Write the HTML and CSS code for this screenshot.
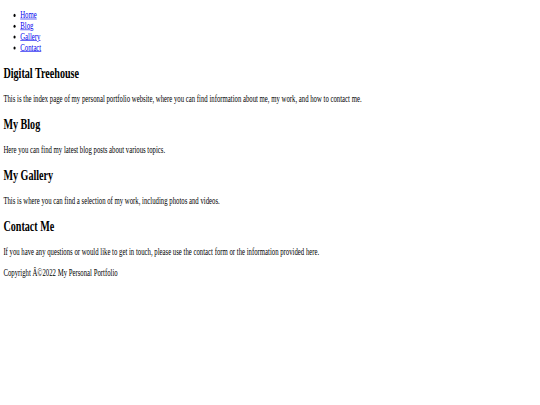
FILE: index.html
```html
<!DOCTYPE html>
<html lang="en">
<head>
<meta charset="utf-8">
<title>Digital Treehouse</title>
<link rel="stylesheet" href="styles.css">
</head>
<body>
<div class="viewport">
<div class="page">
  <header>
    <nav>
      <ul class="nav-list">
        <li><a href="#">Home</a></li>
        <li><a href="#">Blog</a></li>
        <li><a href="#">Gallery</a></li>
        <li><a href="#">Contact</a></li>
      </ul>
    </nav>
  </header>
  <main>
    <section>
      <h2>Digital Treehouse</h2>
      <p>This is the index page of my personal portfolio website, where you can find information about me, my work, and how to contact me.</p>
    </section>
    <section>
      <h2>My Blog</h2>
      <p>Here you can find my latest blog posts about various topics.</p>
    </section>
    <section>
      <h2>My Gallery</h2>
      <p>This is where you can find a selection of my work, including photos and videos.</p>
    </section>
    <section>
      <h2>Contact Me</h2>
      <p>If you have any questions or would like to get in touch, please use the contact form or the information provided here.</p>
    </section>
  </main>
  <footer>
    <p>Copyright Â©2022 My Personal Portfolio</p>
  </footer>
</div>
</div>
</body>
</html>
```

FILE: styles.css
```css
html, body {
  margin: 0;
  padding: 0;
  overflow: hidden;
  background: #ffffff;
}

.viewport {
  width: 540px;
  height: 405px;
  overflow: hidden;
}

.page {
  display: flow-root;
  width: 1264px;
  padding: 0 8px;
  font-family: "Liberation Serif", "Times New Roman", serif;
  font-size: 16px;
  color: #000000;
  transform-origin: 0 0;
  transform: scale(0.421875, 0.603);
}

.nav-list {
  margin: 16px 0;
  padding-left: 40px;
}

.nav-list a {
  color: #0000ee;
}

h2 {
  font-size: 24px;
  font-weight: bold;
  margin: 19.92px 0;
}

p {
  margin: 16px 0;
}
```
